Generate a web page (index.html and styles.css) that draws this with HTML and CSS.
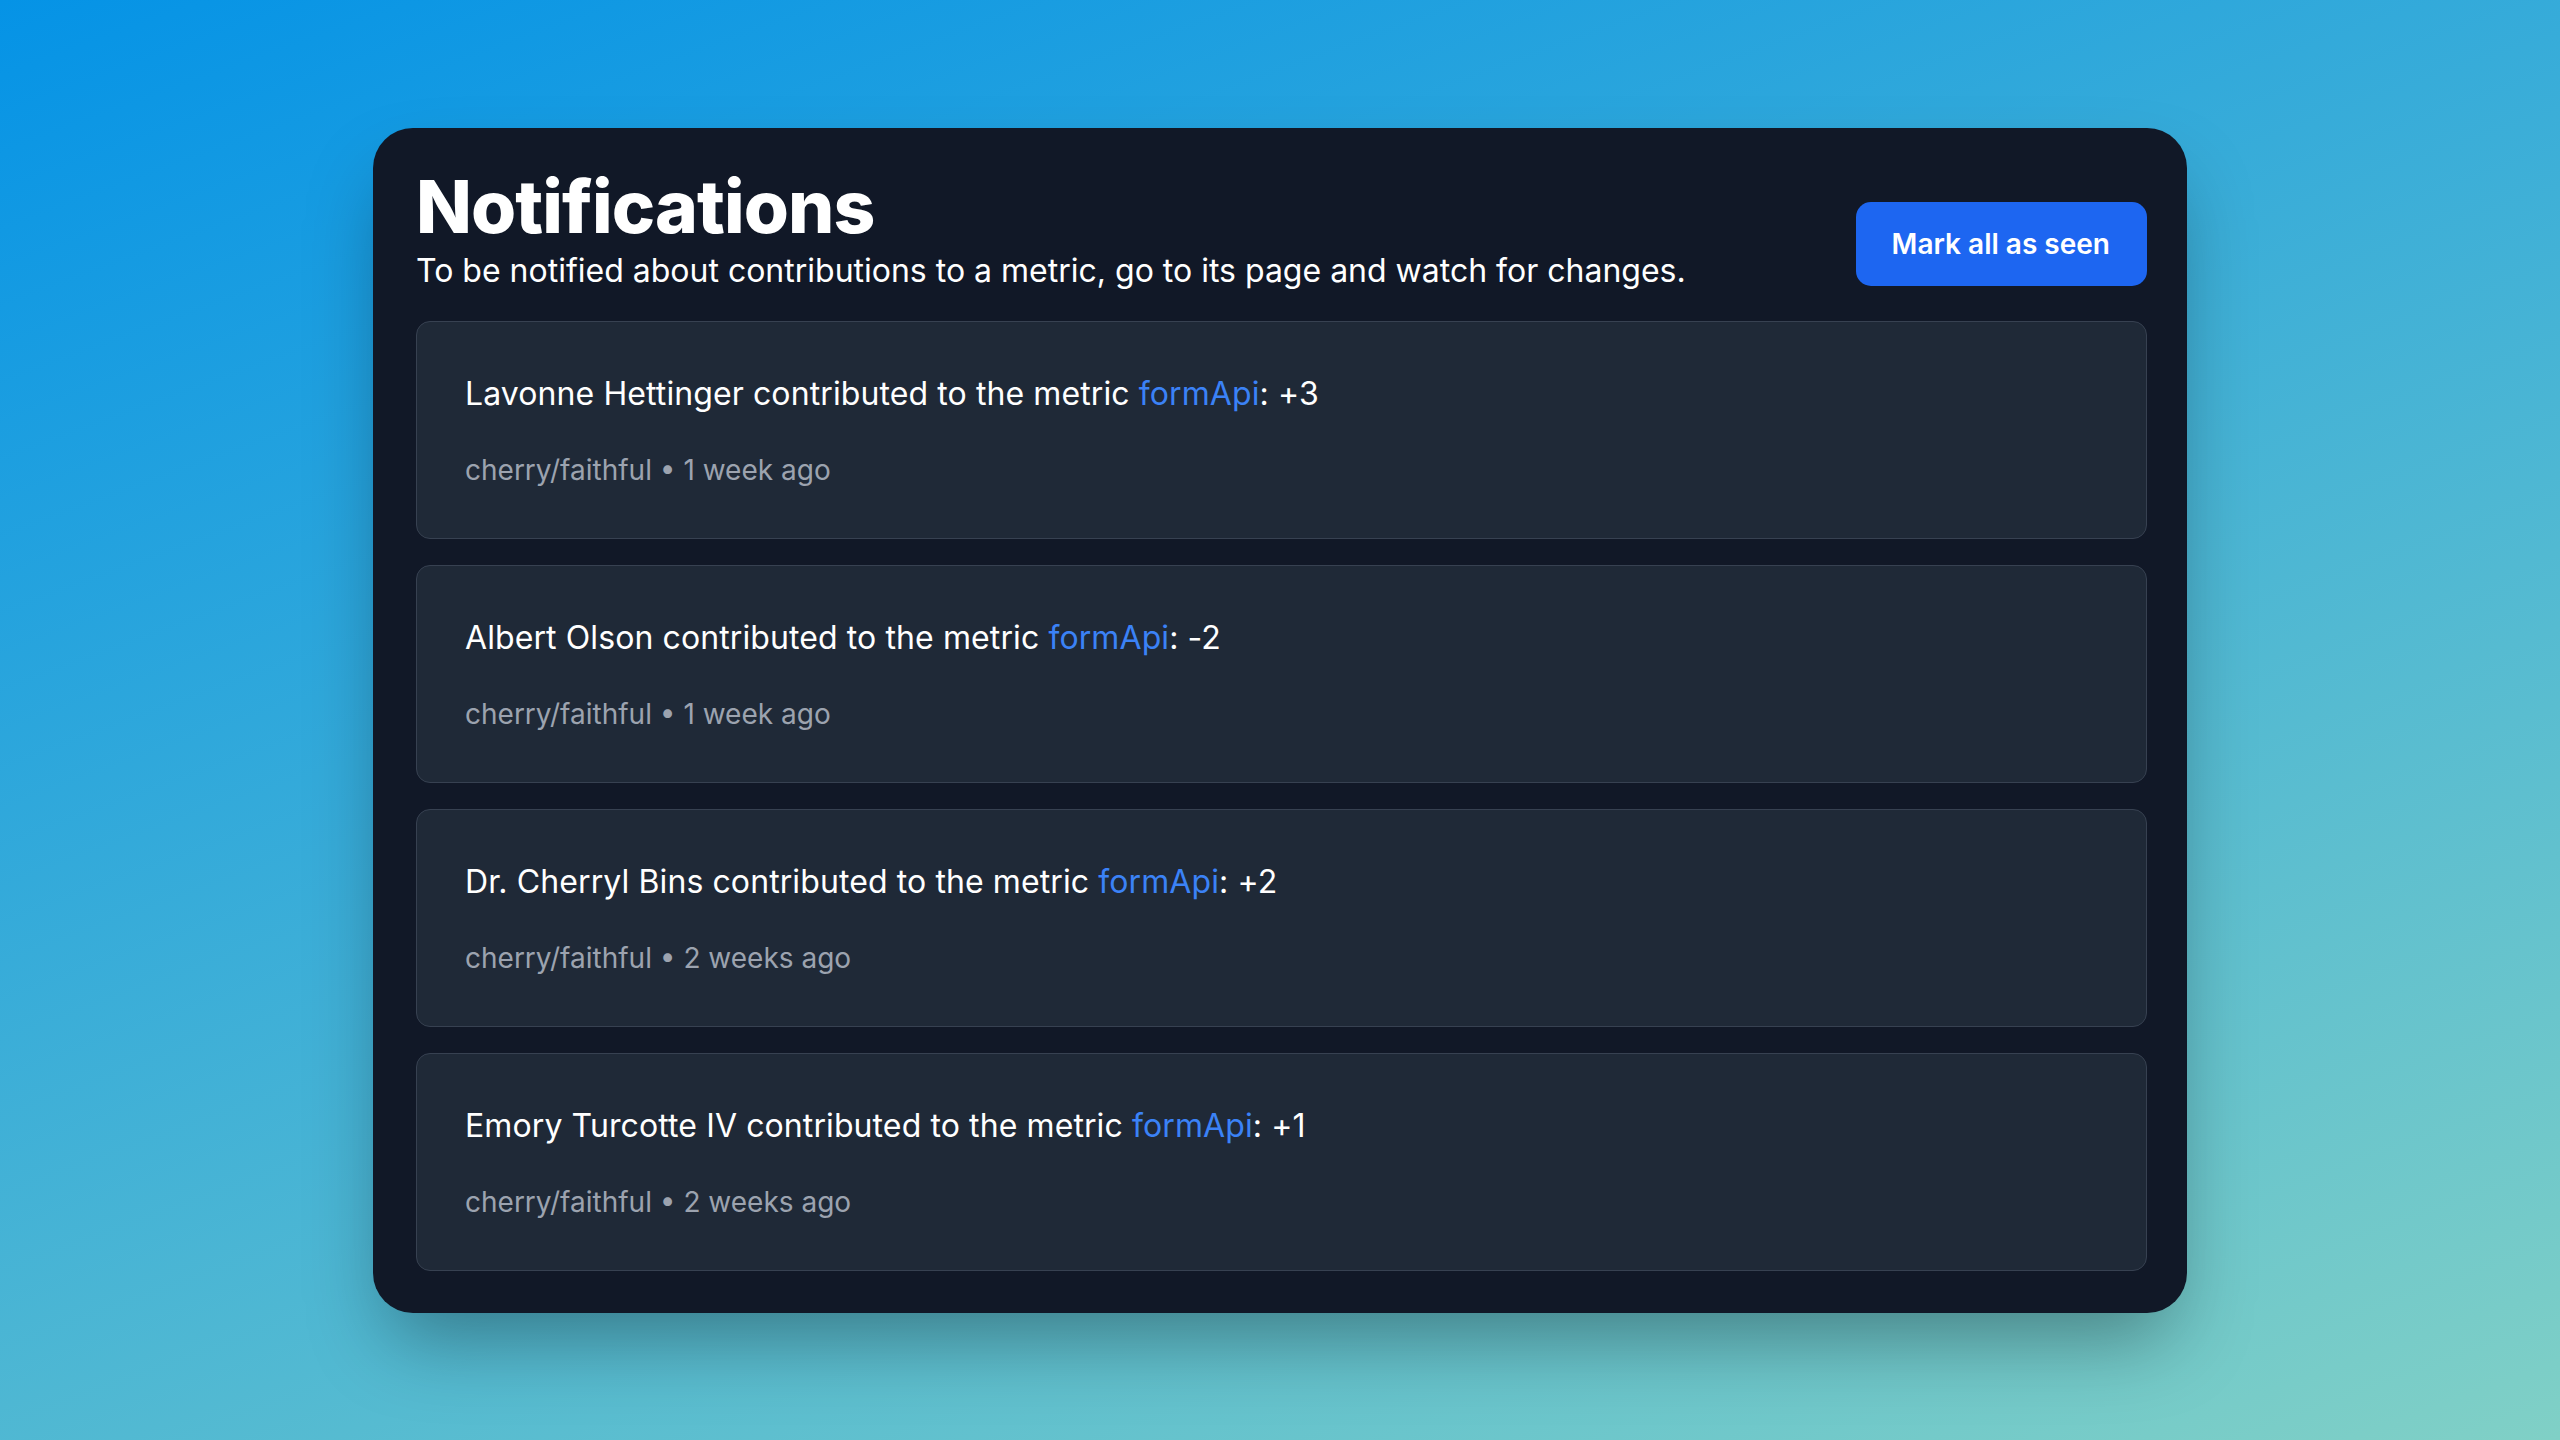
FILE: index.html
```html
<!DOCTYPE html>
<html lang="en">
<head>
<meta charset="utf-8">
<title>Notifications</title>
<link rel="stylesheet" href="styles.css">
</head>
<body>
<main class="panel">
  <header class="panel-header">
    <div class="intro">
      <h1 class="title">Notifications</h1>
      <p class="subtitle">To be notified about contributions to a metric, go to its page and watch for changes.</p>
    </div>
    <button class="mark-btn" type="button">Mark all as seen</button>
  </header>
  <ul class="list">
    <li class="item">
      <p class="item-text">Lavonne Hettinger contributed to the metric <a class="metric" href="#">formApi</a>: +3</p>
      <p class="item-meta">cherry/faithful • 1 week ago</p>
    </li>
    <li class="item">
      <p class="item-text">Albert Olson contributed to the metric <a class="metric" href="#">formApi</a>: -2</p>
      <p class="item-meta">cherry/faithful • 1 week ago</p>
    </li>
    <li class="item">
      <p class="item-text">Dr. Cherryl Bins contributed to the metric <a class="metric" href="#">formApi</a>: +2</p>
      <p class="item-meta">cherry/faithful • 2 weeks ago</p>
    </li>
    <li class="item">
      <p class="item-text">Emory Turcotte IV contributed to the metric <a class="metric" href="#">formApi</a>: +1</p>
      <p class="item-meta">cherry/faithful • 2 weeks ago</p>
    </li>
  </ul>
</main>
</body>
</html>
```

FILE: styles.css
```css
* { box-sizing: border-box; }

html, body { height: 100%; }

body {
  margin: 0;
  min-height: 100vh;
  display: flex;
  align-items: center;
  justify-content: center;
  font-family: Inter, "Noto Sans", "Liberation Sans", sans-serif;
  background: linear-gradient(160deg, #0593e6 0%, #80d0c6 100%);
  color: #ffffff;
}

.panel {
  width: 1814px;
  background: #111827;
  border-radius: 40px;
  padding: 42px 40px 42px 43px;
  box-shadow: 0 40px 80px -16px rgba(0, 0, 0, 0.35);
}

.panel-header {
  display: flex;
  justify-content: space-between;
  align-items: flex-end;
  margin-bottom: 26px;
}

.title {
  margin: 0;
  font-size: 73px;
  line-height: 74px;
  font-weight: 800;
  letter-spacing: -0.9px;
}

.subtitle {
  margin: 3px 0 0;
  font-size: 32px;
  line-height: 48px;
  font-weight: 400;
}

.mark-btn {
  margin-bottom: 9px;
  height: 84px;
  padding: 0 37px 0 36px;
  border: 0;
  border-radius: 15px;
  background: #1d66f1;
  color: #ffffff;
  font-family: inherit;
  font-size: 28px;
  font-weight: 600;
}

.list {
  list-style: none;
  margin: 0;
  padding: 0;
  display: flex;
  flex-direction: column;
  gap: 26px;
}

.item {
  background: #1f2937;
  border: 1px solid #374151;
  border-radius: 14px;
  padding: 48px 49px 47px 48px;
}

.item-text {
  margin: 0 0 31px;
  font-size: 32px;
  line-height: 48px;
  letter-spacing: 0.1px;
  color: #ffffff;
}

.metric {
  color: #3b82f6;
  text-decoration: none;
}

.item-meta {
  margin: 0;
  font-size: 28px;
  line-height: 42px;
  color: #9ca3af;
}
```
